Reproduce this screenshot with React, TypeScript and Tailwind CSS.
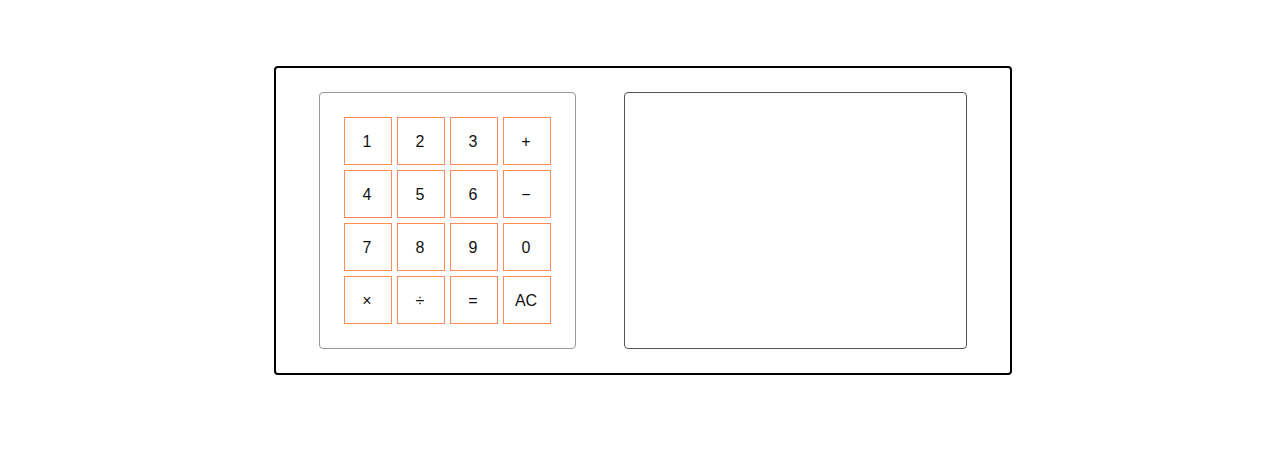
const keys = ['1', '2', '3', '+', '4', '5', '6', '−', '7', '8', '9', '0', '×', '÷', '=', 'AC'];

export default function App() {
  return (
    <div className="min-h-screen bg-white pt-[66px] flex items-start justify-center pl-[6px]" style={{ fontFamily: '"Liberation Sans", Arial, sans-serif' }}>
      <div className="w-[738px] border-2 border-black rounded-[4px] px-[43px] py-[24px] flex gap-[48px]">
        <div className="w-[257px] h-[257px] border border-[#999999] rounded-[4px] p-[24px]">
          <div className="grid grid-cols-4 gap-[5px]">
            {keys.map((k) => (
              <button
                key={k}
                className="w-[48px] h-[48px] border border-[#ff8a5c] bg-white text-[16px] text-[#111111] flex items-center justify-center pt-[2px] pr-[2px]"
              >
                {k}
              </button>
            ))}
          </div>
        </div>
        <div className="w-[343px] h-[257px] border border-[#555555] rounded-[4px]" />
      </div>
    </div>
  );
}
